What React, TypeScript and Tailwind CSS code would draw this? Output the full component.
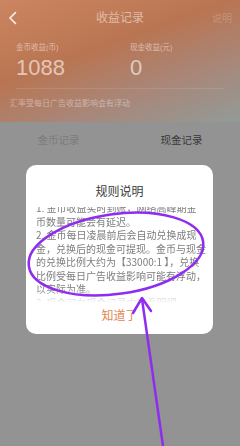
import React from "react";

const rules: string[][] = [
  ["1. 金币收益实时到账，网络高峰期金", "币数量可能会有延迟。"],
  [
    "2. 金币每日凌晨前后会自动兑换成现",
    "金，兑换后的现金可提现。金币与现金",
    "的兑换比例大约为【33000:1 】，兑换",
    "比例受每日广告收益影响可能有浮动，",
    "以实际为准。",
  ],
  ["3. 现金可在现金记录中查看明细。"],
];

function ChevronLeft() {
  return (
    <svg width="10" height="14" viewBox="0 0 10 14" fill="none">
      <path d="M7.5 1.5L2 7l5.5 5.5" stroke="white" strokeOpacity="0.9" strokeWidth="1.6" strokeLinecap="round" strokeLinejoin="round" />
    </svg>
  );
}

export default function App() {
  return (
    <div className="relative w-[240px] h-[446px] overflow-hidden bg-[#939393] font-['Liberation_Sans','Noto_Sans_CJK_SC',sans-serif]">
      {/* Header */}
      <div className="h-[122px] bg-[linear-gradient(160deg,#cc8560_0%,#b97552_40%,#a8877a_70%,#929b97_100%)]">
        <div className="relative h-[36px] flex items-center justify-center">
          <div className="absolute left-[8px] top-[11px]">
            <ChevronLeft />
          </div>
          <span className="text-[12px] text-white/50">收益记录</span>
          <span className="absolute right-[8px] text-[10px] text-white/20">说明</span>
        </div>

        <div className="mx-4 pt-[6px] pb-[8px] flex border-b border-white/10">
          <div className="w-[114px]">
            <div className="text-[7.5px] leading-[12px] text-white/50">金币收益(币)</div>
            <div className="mt-[2px] text-[22px] leading-[24px] text-white/60">1088</div>
          </div>
          <div>
            <div className="text-[7.5px] leading-[12px] text-white/50">现金收益(元)</div>
            <div className="mt-[2px] text-[22px] leading-[24px] text-white/60">0</div>
          </div>
        </div>

        <div className="mt-[9px] pl-[10px] text-[8px] leading-[12px] text-white/40">汇率受每日广告收益影响会有浮动</div>
      </div>

      {/* Tabs */}
      <div className="flex h-[38px] items-center text-[10.5px]">
        <div className="flex-1 text-center pr-[6px] text-[#7b7b7b]">金币记录</div>
        <div className="flex-1 text-center text-[#383838]">现金记录</div>
      </div>

      {/* Dialog */}
      <div className="absolute inset-0 pt-[165px] pl-[26px]">
        <div className="w-[187px] h-[169px] rounded-[10px] bg-white flex flex-col">
          <div className="pt-[20px] text-center text-[12px] leading-[14px] text-[#3a3a3a]">规则说明</div>
          <div className="mt-[8px] h-[96px] overflow-hidden pl-[10px] [mask-image:linear-gradient(to_bottom,black_84%,transparent)]">
            <div className="-mt-[6px] text-[10px] leading-[13.5px] text-[#7d7d7d] font-['Noto_Sans_CJK_SC',sans-serif]">
              {rules.map((p, i) => (
                <div key={i}>
                  {p.map((line) => (
                    <div key={line} className="whitespace-nowrap">
                      {line}
                    </div>
                  ))}
                </div>
              ))}
            </div>
          </div>
          <div className="mt-[5px] text-center text-[12px] leading-[16px] text-[#e2864f]">知道了</div>
        </div>
      </div>

      {/* Annotation */}
      <svg className="absolute inset-0 pointer-events-none" width="240" height="446" viewBox="0 0 240 446" fill="none">
        <ellipse cx="116" cy="254" rx="88" ry="40" transform="rotate(-8 116 254)" stroke="#8f2cf0" strokeWidth="2.5" />
        <path d="M163 446L142 299" stroke="#8f2cf0" strokeWidth="2.5" strokeLinecap="round" />
        <path d="M133 313L142 298L151 311" stroke="#8f2cf0" strokeWidth="2.5" strokeLinecap="round" strokeLinejoin="round" />
      </svg>
    </div>
  );
}
